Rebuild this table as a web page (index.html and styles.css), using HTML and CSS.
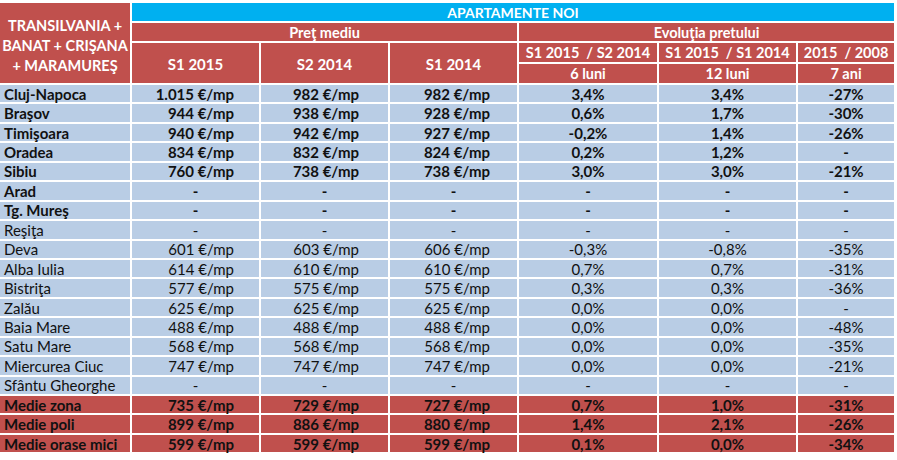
FILE: index.html
```html
<!DOCTYPE html>
<html lang="ro">
<head>
<meta charset="utf-8">
<title>Apartamente noi</title>
<link rel="stylesheet" href="styles.css">
</head>
<body>
<table class="grid">
  <colgroup>
    <col class="c-name"><col class="c-price"><col class="c-price"><col class="c-price"><col class="c-evo"><col class="c-evo2"><col class="c-evo3">
  </colgroup>
  <thead>
    <tr class="h-band">
      <th rowspan="4" class="region">TRANSILVANIA +<br>BANAT + CRIŞANA<br>+ MARAMUREŞ</th>
      <th colspan="6" class="band">APARTAMENTE NOI</th>
    </tr>
    <tr class="h-group">
      <th colspan="3">Preţ mediu</th>
      <th colspan="3">Evoluţia pretului</th>
    </tr>
    <tr class="h-sub">
      <th rowspan="2" class="big">S1 2015</th>
      <th rowspan="2" class="big">S2 2014</th>
      <th rowspan="2" class="big">S1 2014</th>
      <th>S1 2015&nbsp; / S2 2014</th>
      <th>S1 2015&nbsp; / S1 2014</th>
      <th>2015&nbsp; / 2008</th>
    </tr>
    <tr class="h-sub2">
      <th>6 luni</th>
      <th>12 luni</th>
      <th>7 ani</th>
    </tr>
  </thead>
  <tbody>
    <tr class="bold"><td class="name">Cluj-Napoca</td><td class="p p2">1.015 €/mp</td><td class="p p3">982 €/mp</td><td class="p p4">982 €/mp</td><td>3,4%</td><td>3,4%</td><td>-27%</td></tr>
    <tr class="bold"><td class="name">Braşov</td><td class="p p2">944 €/mp</td><td class="p p3">938 €/mp</td><td class="p p4">928 €/mp</td><td>0,6%</td><td>1,7%</td><td>-30%</td></tr>
    <tr class="bold"><td class="name">Timişoara</td><td class="p p2">940 €/mp</td><td class="p p3">942 €/mp</td><td class="p p4">927 €/mp</td><td>-0,2%</td><td>1,4%</td><td>-26%</td></tr>
    <tr class="bold"><td class="name">Oradea</td><td class="p p2">834 €/mp</td><td class="p p3">832 €/mp</td><td class="p p4">824 €/mp</td><td>0,2%</td><td>1,2%</td><td>-</td></tr>
    <tr class="bold"><td class="name">Sibiu</td><td class="p p2">760 €/mp</td><td class="p p3">738 €/mp</td><td class="p p4">738 €/mp</td><td>3,0%</td><td>3,0%</td><td>-21%</td></tr>
    <tr class="bold"><td class="name">Arad</td><td>-</td><td>-</td><td>-</td><td>-</td><td>-</td><td>-</td></tr>
    <tr class="bold"><td class="name">Tg. Mureş</td><td>-</td><td>-</td><td>-</td><td>-</td><td>-</td><td>-</td></tr>
    <tr><td class="name">Reşiţa</td><td>-</td><td>-</td><td>-</td><td>-</td><td>-</td><td>-</td></tr>
    <tr><td class="name">Deva</td><td class="p p2">601 €/mp</td><td class="p p3">603 €/mp</td><td class="p p4">606 €/mp</td><td>-0,3%</td><td>-0,8%</td><td>-35%</td></tr>
    <tr><td class="name">Alba Iulia</td><td class="p p2">614 €/mp</td><td class="p p3">610 €/mp</td><td class="p p4">610 €/mp</td><td>0,7%</td><td>0,7%</td><td>-31%</td></tr>
    <tr><td class="name">Bistriţa</td><td class="p p2">577 €/mp</td><td class="p p3">575 €/mp</td><td class="p p4">575 €/mp</td><td>0,3%</td><td>0,3%</td><td>-36%</td></tr>
    <tr><td class="name">Zalău</td><td class="p p2">625 €/mp</td><td class="p p3">625 €/mp</td><td class="p p4">625 €/mp</td><td>0,0%</td><td>0,0%</td><td>-</td></tr>
    <tr><td class="name">Baia Mare</td><td class="p p2">488 €/mp</td><td class="p p3">488 €/mp</td><td class="p p4">488 €/mp</td><td>0,0%</td><td>0,0%</td><td>-48%</td></tr>
    <tr><td class="name">Satu Mare</td><td class="p p2">568 €/mp</td><td class="p p3">568 €/mp</td><td class="p p4">568 €/mp</td><td>0,0%</td><td>0,0%</td><td>-35%</td></tr>
    <tr><td class="name">Miercurea Ciuc</td><td class="p p2">747 €/mp</td><td class="p p3">747 €/mp</td><td class="p p4">747 €/mp</td><td>0,0%</td><td>0,0%</td><td>-21%</td></tr>
    <tr><td class="name">Sfântu Gheorghe</td><td>-</td><td>-</td><td>-</td><td>-</td><td>-</td><td>-</td></tr>
    <tr class="bold avg"><td class="name">Medie zona</td><td class="p p2">735 €/mp</td><td class="p p3">729 €/mp</td><td class="p p4">727 €/mp</td><td>0,7%</td><td>1,0%</td><td>-31%</td></tr>
    <tr class="bold avg"><td class="name">Medie poli</td><td class="p p2">899 €/mp</td><td class="p p3">886 €/mp</td><td class="p p4">880 €/mp</td><td>1,4%</td><td>2,1%</td><td>-26%</td></tr>
    <tr class="bold avg"><td class="name">Medie orase mici</td><td class="p p2">599 €/mp</td><td class="p p3">599 €/mp</td><td class="p p4">599 €/mp</td><td>0,1%</td><td>0,0%</td><td>-34%</td></tr>
  </tbody>
</table>
</body>
</html>
```

FILE: styles.css
```css
html, body {
  margin: 0;
  padding: 0;
  background: #ffffff;
}

.grid {
  border-collapse: separate;
  border-spacing: 2px;
  margin: 1px 0 0 -2px;
  table-layout: fixed;
  width: 898px;
  font-family: "Lato", "Liberation Sans", sans-serif;
  font-size: 15px;
  color: #111111;
}

.c-name { width: 130px; }
.c-price { width: 127px; }
.c-evo { width: 138px; }
.c-evo2 { width: 137px; }
.c-evo3 { width: 96px; }

.grid th {
  background: #c0504d;
  color: #ffffff;
  font-weight: 700;
  font-size: 14.5px;
  padding: 0;
  text-align: center;
  vertical-align: middle;
  white-space: nowrap;
  line-height: 17px;
}

.grid th.big { font-size: 15px; padding-top: 2px; }

.grid th.band {
  background: #00b0f0;
  height: 18px;
  font-size: 14px;
}

.grid th.region {
  line-height: 20px;
  padding-top: 6px;
  font-size: 14.5px;
}

.h-group th { height: 18px; }
.h-sub th { height: 19px; }
.h-sub2 th { height: 19px; }

.grid td {
  background: #b9cde5;
  height: 17.44px;
  padding: 0;
  line-height: 16px;
  text-align: center;
  vertical-align: middle;
  white-space: nowrap;
}

.grid td.name {
  text-align: left;
  padding-left: 4px;
}

.grid td.p { text-align: right; }
.grid td.p2 { padding-right: 25px; }
.grid td.p3 { padding-right: 29px; }
.grid td.p4 { padding-right: 27px; }

.bold td { font-weight: 700; }

.avg td { background: #c0504d; color: #111111; }
```
